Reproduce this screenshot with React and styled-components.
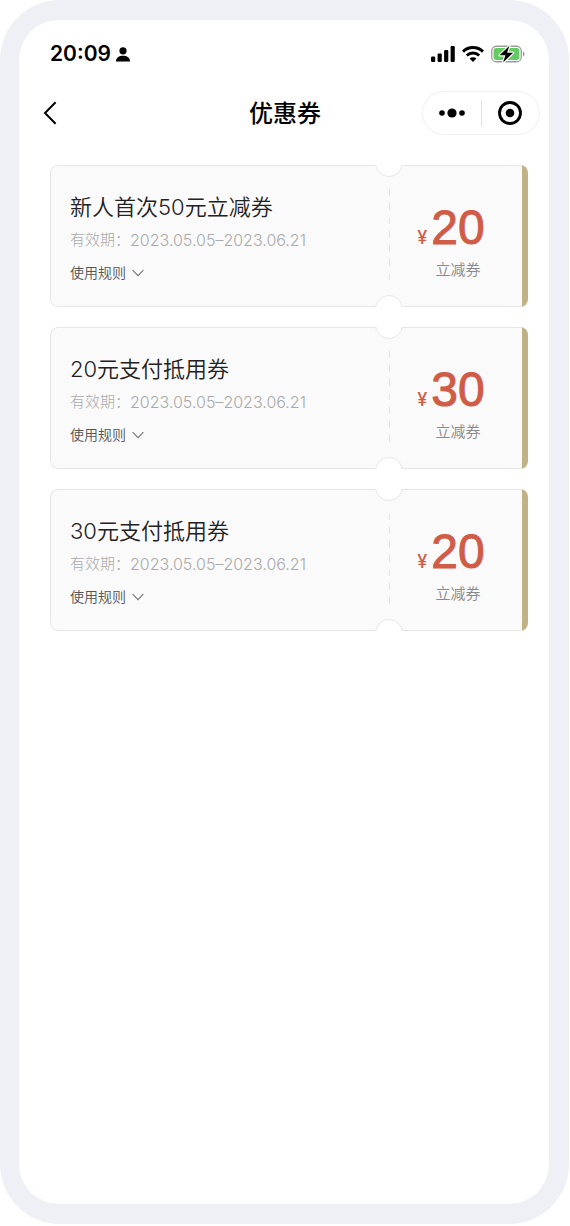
import React from 'react';
import styled, { createGlobalStyle } from 'styled-components';

const GlobalStyle = createGlobalStyle`
  *, *::before, *::after { box-sizing: border-box; }
  body {
    margin: 0;
    background: #fff;
    font-family: Inter, "Noto Sans CJK SC", sans-serif;
    color: #000;
  }
  button {
    margin: 0;
    padding: 0;
    border: 0;
    background: none;
    font: inherit;
    color: inherit;
    cursor: pointer;
  }
  svg { display: block; }
`;

const Phone = styled.div`
  display: flex;
  min-height: calc(100vh - 2px);
  margin-right: 1px;
  padding: 20px 20px 20px 19px;
  border-radius: 60px;
  background: #eff0f5;
`;

const Screen = styled.div`
  flex: 1;
  min-width: 0;
  border-radius: 40px;
  background: #fff;
`;

const StatusBar = styled.div`
  display: flex;
  align-items: center;
  justify-content: space-between;
  padding: 22px 24px 0 31px;
  height: 46px;
`;

const StatusGroup = styled.div`
  display: flex;
  align-items: center;
  gap: ${(p) => p.$gap}px;
`;

const Clock = styled.span`
  font: 600 21px/24px Inter, sans-serif;
`;

const NavBar = styled.header`
  display: grid;
  grid-template-columns: 1fr auto 1fr;
  align-items: center;
  margin-top: 25px;
  padding: 0 9px 0 11px;
`;

const BackButton = styled.button`
  display: flex;
  align-items: center;
  justify-content: center;
  width: 40px;
  height: 44px;
`;

const PageTitle = styled.h1`
  margin: 0;
  padding-bottom: 2px;
  font: 500 24px/32px "Noto Sans CJK SC", sans-serif;
`;

const Capsule = styled.div`
  display: flex;
  align-items: center;
  justify-self: end;
  width: 118px;
  height: 44px;
  border: 1px solid #f0f0f0;
  border-radius: 22px;
`;

const CapsuleButton = styled.button`
  display: flex;
  flex: 1;
  align-items: center;
  justify-content: center;
  height: 26px;

  & + & { border-left: 1px solid #e2e2e2; }
`;

const CouponList = styled.ul`
  display: flex;
  flex-direction: column;
  gap: 20px;
  margin: 0;
  padding: 30px 21px 32px 31px;
  list-style: none;
`;

const Coupon = styled.li`
  position: relative;
  overflow: hidden;
  border-radius: 8px;
`;

const CouponBody = styled.div`
  display: flex;
  border: 1px solid #e6e6e6;
  border-right: 0;
  border-radius: 8px;
  background: #fafafa;

  &::after {
    content: "";
    width: 6px;
    margin: -1px 0;
    background: #c1b285;
  }
`;

const Notch = styled.span`
  position: absolute;
  right: 125px;
  ${(p) => p.$side}: -16px;
  width: 28px;
  height: 28px;
  border: 1px solid #e6e6e6;
  border-radius: 50%;
  background: #fff;
`;

const Details = styled.div`
  display: flex;
  flex: 1;
  flex-direction: column;
  align-items: flex-start;
  gap: 9px;
  min-width: 0;
  padding: 29px 0 21px 19px;
  line-height: 24px;
`;

const CouponName = styled.h2`
  margin: 0;
  font-size: 22px;
  font-weight: 350;
  line-height: 24px;
  color: #222;
`;

const Validity = styled.div`
  display: flex;
  font-size: 15px;
  font-weight: 300;
  color: #aaa;
`;

const Dates = styled.span`
  font-size: 16px;
`;

const RulesButton = styled.button`
  display: flex;
  align-items: center;
  gap: 6px;
  font-size: 14px;
  font-weight: 350;
  line-height: 24px;
  color: #555;
`;

const Stub = styled.div`
  display: flex;
  width: 133px;
  padding: 23px 0;

  &::before {
    content: "";
    width: 1px;
    background: repeating-linear-gradient(#e4e4e4 0 7px, transparent 7px 14px);
  }
`;

const Price = styled.div`
  display: grid;
  flex: 1;
  grid-template-columns: auto auto;
  align-items: baseline;
  justify-content: center;
  align-content: center;
  gap: 4px;
  padding: 11px 10px 0 0;
  color: #d05c48;
`;

const Currency = styled.span`
  font-size: 18px;
  font-weight: 500;
`;

const Amount = styled.span`
  font-family: "Liberation Sans", Arial, sans-serif;
  font-size: 48px;
  line-height: 52px;
  -webkit-text-stroke: 1px currentColor;
`;

const Kind = styled.span`
  grid-column: 2;
  justify-self: center;
  font-size: 15px;
  font-weight: 350;
  line-height: 24px;
  color: #888;
`;

const coupons = [
  { name: '新人首次50元立减券', dates: '2023.05.05–2023.06.21', amount: 20 },
  { name: '20元支付抵用券', dates: '2023.05.05–2023.06.21', amount: 30 },
  { name: '30元支付抵用券', dates: '2023.05.05–2023.06.21', amount: 20 },
];

function PersonIcon() {
  return (
    <svg width="14" height="15" viewBox="0 0 14 15" aria-hidden="true">
      <circle cx="7" cy="3.8" r="3.6" />
      <path d="M0 14.5C0 10.6 3 8.8 7 8.8s7 1.8 7 5.7z" />
    </svg>
  );
}

function SignalIcon() {
  return (
    <svg width="24" height="16" viewBox="0 0 24 16" aria-hidden="true">
      <rect x="0" y="10.5" width="4.2" height="5.5" rx="1.2" />
      <rect x="6.6" y="7.5" width="4.2" height="8.5" rx="1.2" />
      <rect x="13.1" y="4" width="4.2" height="12" rx="1.2" />
      <rect x="19.6" y="0" width="4.2" height="16" rx="1.2" />
    </svg>
  );
}

function WifiIcon() {
  return (
    <svg width="22" height="16" viewBox="0 0 22 16" aria-hidden="true">
      <g fill="none" stroke="#000" strokeWidth="2.9">
        <path d="M1 5.6a14.3 14.3 0 0 1 20 0" />
        <path d="M4.8 9.5a8.9 8.9 0 0 1 12.4 0" />
      </g>
      <path d="M11 16 7.6 12.6a4.8 4.8 0 0 1 6.8 0z" />
    </svg>
  );
}

function BatteryIcon() {
  return (
    <svg width="34" height="18" viewBox="0 0 34 18" aria-hidden="true">
      <rect x="0.75" y="1.25" width="29.5" height="15.5" rx="4.6" fill="none" stroke="#9b9b9b" strokeWidth="1.3" />
      <path d="M32 6.5c2 .8 2 4.2 0 5z" fill="#9b9b9b" />
      <rect x="2.6" y="3.1" width="25.8" height="11.8" rx="2.6" fill="#62cb62" />
      <path d="M18.4.8 8.6 10.3h5.8l-2.3 7.3 10-9.8h-6z" fill="#000" stroke="#fff" strokeWidth="2.4" strokeLinejoin="round" paintOrder="stroke" />
    </svg>
  );
}

function CouponCard({ name, dates, amount }) {
  return (
    <Coupon>
      <CouponBody>
        <Details>
          <CouponName>{name}</CouponName>
          <Validity>
            <span>有效期：</span>
            <Dates>{dates}</Dates>
          </Validity>
          <RulesButton type="button">
            使用规则
            <svg width="12" height="8" viewBox="0 0 12 8" fill="none" stroke="#777" strokeWidth="1.2" aria-hidden="true">
              <path d="m.6 1.2 5.4 5.4 5.4-5.4" />
            </svg>
          </RulesButton>
        </Details>
        <Stub>
          <Price>
            <Currency>¥</Currency>
            <Amount>{amount}</Amount>
            <Kind>立减券</Kind>
          </Price>
        </Stub>
      </CouponBody>
      <Notch $side="top" />
      <Notch $side="bottom" />
    </Coupon>
  );
}

export default function App() {
  return (
    <>
      <GlobalStyle />
      <Phone>
        <Screen>
          <StatusBar>
            <StatusGroup $gap={5}>
              <Clock>20:09</Clock>
              <PersonIcon />
            </StatusGroup>
            <StatusGroup $gap={7}>
              <SignalIcon />
              <WifiIcon />
              <BatteryIcon />
            </StatusGroup>
          </StatusBar>
          <NavBar>
            <BackButton type="button" aria-label="返回">
              <svg width="14" height="24" viewBox="0 0 14 24" fill="none" stroke="#000" strokeWidth="2" aria-hidden="true">
                <path d="M12.6 1.2 2 12l10.6 10.8" />
              </svg>
            </BackButton>
            <PageTitle>优惠券</PageTitle>
            <Capsule>
              <CapsuleButton type="button" aria-label="更多">
                <svg width="26" height="10" viewBox="0 0 26 10" aria-hidden="true">
                  <circle cx="3" cy="5" r="2.8" />
                  <circle cx="13" cy="5" r="4.6" />
                  <circle cx="23" cy="5" r="2.8" />
                </svg>
              </CapsuleButton>
              <CapsuleButton type="button" aria-label="关闭">
                <svg width="24" height="24" viewBox="0 0 24 24" aria-hidden="true">
                  <circle cx="12" cy="12" r="10.5" fill="none" stroke="#000" strokeWidth="2.8" />
                  <circle cx="12" cy="12" r="4.3" />
                </svg>
              </CapsuleButton>
            </Capsule>
          </NavBar>
          <CouponList>
            {coupons.map((coupon) => (
              <CouponCard key={coupon.name} {...coupon} />
            ))}
          </CouponList>
        </Screen>
      </Phone>
    </>
  );
}
